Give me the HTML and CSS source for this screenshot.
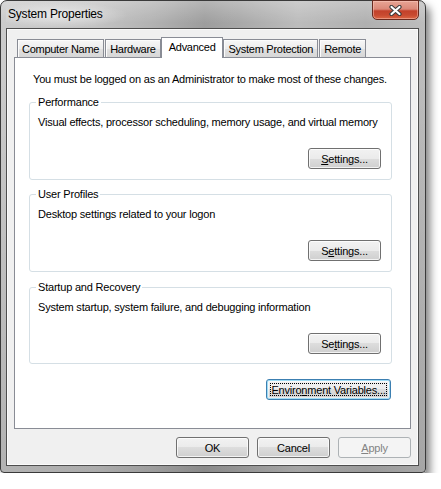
FILE: index.html
```html
<!DOCTYPE html>
<html>
<head>
<meta charset="utf-8">
<title>System Properties</title>
<link rel="stylesheet" href="styles.css">
</head>
<body>
<div class="window">
  <div class="titlebar">
    <span class="title">System Properties</span>
    <div class="close">
      <svg width="13" height="11" viewBox="0 0 13 11">
        <path d="M2.5 2 L10.5 9 M10.5 2 L2.5 9" stroke="#3a3a3a" stroke-width="4.2" stroke-linecap="round"/>
        <path d="M2.5 2 L10.5 9 M10.5 2 L2.5 9" stroke="#ffffff" stroke-width="2.2" stroke-linecap="round"/>
      </svg>
    </div>
  </div>
  <div class="client">
    <div class="tabs">
      <div class="tab">Computer Name</div>
      <div class="tab">Hardware</div>
      <div class="tab active">Advanced</div>
      <div class="tab">System Protection</div>
      <div class="tab">Remote</div>
    </div>
    <div class="panel">
      <p class="intro">You must be logged on as an Administrator to make most of these changes.</p>
      <div class="group">
        <span class="legend">Performance</span>
        <p class="desc">Visual effects, processor scheduling, memory usage, and virtual memory</p>
        <button class="btn"><u>S</u>ettings...</button>
      </div>
      <div class="group group-2">
        <span class="legend">User Profiles</span>
        <p class="desc">Desktop settings related to your logon</p>
        <button class="btn">S<u>e</u>ttings...</button>
      </div>
      <div class="group group-3">
        <span class="legend">Startup and Recovery</span>
        <p class="desc">System startup, system failure, and debugging information</p>
        <button class="btn">Se<u>t</u>tings...</button>
      </div>
      <button class="btn btn-env focus">Enviro<u>n</u>ment Variables...</button>
    </div>
    <div class="actions">
      <button class="btn">OK</button>
      <button class="btn">Cancel</button>
      <button class="btn disabled"><u>A</u>pply</button>
    </div>
  </div>
</div>
</body>
</html>
```
FILE: styles.css
```css
* { box-sizing: border-box; }
html, body { margin: 0; padding: 0; background: #ffffff; }
body {
  font-family: "Liberation Sans", Arial, sans-serif;
  font-size: 11px;
  letter-spacing: -0.2px;
  color: #000;
}
p { margin: 0; }

.window {
  width: 426px;
  height: 473px;
  border: 1px solid #3a3a3a;
  border-radius: 7px 7px 4px 4px;
  padding: 0 6px 6px 5px;
  display: flex;
  flex-direction: column;
  background:
    linear-gradient(to bottom, rgba(255,255,255,0.25) 0, rgba(255,255,255,0) 22px, rgba(0,0,0,0) 60px, rgba(0,0,0,0.12) 100%),
    linear-gradient(90deg, #cbcbcb 0%, #c4c4c4 22%, #b2b2b2 36%, #9d9d9d 48%, #a8a8a8 56%, #bcbcbc 70%, #b0b0b0 86%, #bdbdbd 100%);
  box-shadow: 4px 6px 9px rgba(0,0,0,0.5);
}

.titlebar {
  height: 27px;
  display: flex;
  justify-content: space-between;
  align-items: flex-start;
  padding-left: 2px;
  background: radial-gradient(ellipse 70px 13px at 52px 14px, rgba(255,255,255,0.55), rgba(255,255,255,0));
}
.title {
  font-size: 12px;
  line-height: 15px;
  padding-top: 6px;
  color: #000;
}
.close {
  width: 47px;
  height: 20px;
  margin-top: -1px;
  border: 1px solid #6a2a1f;
  border-radius: 0 0 5px 5px;
  background: linear-gradient(#e8a595 0%, #db8878 45%, #c3412a 55%, #c84a30 78%, #dc6644 100%);
  box-shadow: inset 0 0 0 1px rgba(255,210,200,0.45);
  display: flex;
  align-items: center;
  justify-content: center;
}
.close svg { display: block; }

.client {
  flex: 1;
  border: 1px solid #4e4e4e;
  background: #f0f0f0;
  box-shadow: inset 0 0 0 1px #fbfbfb;
  padding: 8px 7px 0 7px;
  display: flex;
  flex-direction: column;
}

.tabs {
  height: 20px;
  display: flex;
  align-items: flex-start;
  padding-left: 3px;
  letter-spacing: -0.27px;
}
.tab {
  height: 18px;
  margin-top: 2px;
  padding: 2px 4px 0;
  line-height: 14px;
  border: 1px solid #898c95;
  border-bottom: none;
  margin-right: 1px;
  background: linear-gradient(#f7f7f7, #ececec 50%, #e0e0e0 51%, #d7d7d7);
  box-shadow: inset 1px 1px 0 #fcfcfc;
  white-space: nowrap;
}
.tab.active {
  height: 21px;
  margin-top: 0;
  margin-left: -1px;
  margin-right: 0;
  padding: 2px 7px 0;
  background: #ffffff;
  box-shadow: none;
  position: relative;
  z-index: 1;
}

.panel {
  flex: 1;
  border: 1px solid #898c95;
  background: #ffffff;
  padding: 14px 18px 0 14px;
  display: flex;
  flex-direction: column;
}
.intro { margin-left: 4px; line-height: 14px; }

.group {
  position: relative;
  margin-top: 16px;
  border: 1px solid #d5dfe5;
  border-radius: 3px;
  padding: 12px 10px 10px 8px;
  display: flex;
  flex-direction: column;
}
.group-2 { margin-top: 14px; }
.group-3 { margin-top: 15px; padding-bottom: 9px; }
.legend {
  position: absolute;
  top: -8px;
  left: 6px;
  padding: 0 2px;
  line-height: 14px;
  background: #ffffff;
}
.desc { line-height: 14px; }

.btn {
  width: 73px;
  height: 21px;
  padding: 0;
  font: inherit;
  letter-spacing: inherit;
  color: #000;
  border: 1px solid #707070;
  border-radius: 3px;
  background: linear-gradient(#f2f2f2, #ebebeb 50%, #dddddd 50%, #cfcfcf);
  box-shadow: inset 0 0 0 1px rgba(255,255,255,0.75);
  position: relative;
}
.group .btn { align-self: flex-end; margin-top: 19px; }
.btn-env {
  width: 125px;
  align-self: flex-end;
  margin-top: 15px;
  margin-right: 1px;
}
.btn.focus {
  border-color: #3c7fb1;
  box-shadow: inset 0 0 0 1px #9fdcf5, inset 0 0 0 2px rgba(255,255,255,0.6);
}
.btn.focus::after {
  content: "";
  position: absolute;
  top: 3px; left: 3px; right: 3px; bottom: 3px;
  border: 1px dotted #000;
}
.btn.disabled {
  color: #838383;
  border-color: #adb2b5;
  background: #f4f4f4;
  box-shadow: none;
}

.actions {
  display: flex;
  justify-content: flex-end;
  gap: 8px;
  padding: 8px 0 7px;
}
```
